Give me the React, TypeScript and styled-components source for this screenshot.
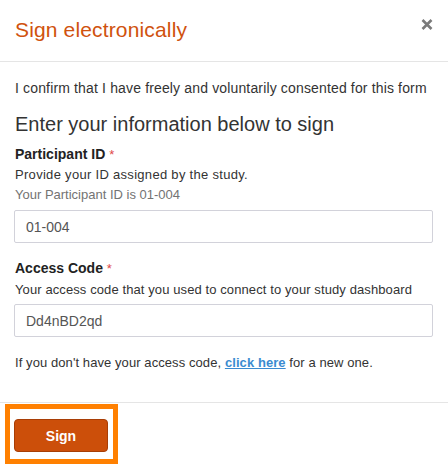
import React from "react";
import styled, { createGlobalStyle } from "styled-components";

const Global = createGlobalStyle`
  html, body { margin: 0; padding: 0; background: #fff; }
  body { font-family: "Liberation Sans", Arial, sans-serif; color: #333; }
  * { box-sizing: border-box; }
`;

const Modal = styled.div`
  width: 448px;
  height: 467px;
  background: #fff;
  display: flex;
  flex-direction: column;
`;

const Header = styled.div`
  height: 62px;
  padding: 15px 15px 0 15px;
  border-bottom: 1px solid #e5e5e5;
  display: flex;
  align-items: flex-start;
  justify-content: space-between;
`;

const Title = styled.h4`
  margin: 0;
  font-size: 21px;
  font-weight: normal;
  line-height: 30px;
  letter-spacing: 0.15px;
  color: #d0520e;
`;

const Close = styled.button`
  border: 0;
  background: none;
  padding: 0;
  margin: 4px 0 0 0;
  width: 12px;
  height: 12px;
  cursor: pointer;
  display: flex;
`;

const Body = styled.div`
  padding: 16px 15px 0 14px;
  display: flex;
  flex-direction: column;
`;

const Para = styled.p<{ $mt?: number; $size?: number; $ls?: number }>`
  margin: ${(p) => p.$mt ?? 0}px 0 0 0;
  font-size: ${(p) => p.$size ?? 13}px;
  letter-spacing: ${(p) => p.$ls ?? 0}px;
  line-height: 20px;
  padding-left: 1px;
`;

const Heading = styled.h3`
  margin: 12px 0 0 0;
  font-size: 20px;
  line-height: 28px;
  font-weight: normal;
  color: #333;
  padding-left: 1px;
`;

const Label = styled.label<{ $mt: number }>`
  margin-top: ${(p) => p.$mt}px;
  font-size: 14px;
  line-height: 20px;
  font-weight: bold;
  color: #222;
  padding-left: 1px;
`;

const Req = styled.span`
  color: #e04848;
  font-weight: normal;
  font-size: 13px;
`;

const Help = styled.div<{ $muted?: boolean; $ls?: number; $mt?: number }>`
  margin-top: ${(p) => p.$mt ?? 0}px;
  font-size: 13px;
  line-height: 20px;
  letter-spacing: ${(p) => p.$ls ?? 0}px;
  color: ${(p) => (p.$muted ? "#737373" : "#333")};
  padding-left: 1px;
`;

const Input = styled.input<{ $mt: number }>`
  margin-top: ${(p) => p.$mt}px;
  width: 419px;
  height: 33px;
  border: 1px solid #d2d2da;
  border-radius: 2px;
  padding: 0 11px;
  font-family: "Liberation Sans", Arial, sans-serif;
  font-size: 14px;
  color: #555;
  outline: none;
`;

const Link = styled.a`
  color: #3a8bd0;
  font-weight: bold;
  text-decoration: underline;
`;

const Spacer = styled.div`
  flex: 1;
`;

const Footer = styled.div`
  border-top: 1px solid #e5e5e5;
  padding: 1px 0 3px 5px;
  display: flex;
`;

const Focus = styled.div`
  border: 5px solid #ff8000;
  padding: 10px 5px 7px 4px;
  display: flex;
`;

const SignButton = styled.button`
  width: 94px;
  height: 33px;
  background: #cc4f0a;
  border: 1px solid #a83e06;
  border-radius: 4px;
  color: #fff;
  font-family: "Liberation Sans", Arial, sans-serif;
  font-size: 14px;
  font-weight: bold;
  cursor: pointer;
`;

export default function App() {
  return (
    <>
      <Global />
      <Modal>
        <Header>
          <Title>Sign electronically</Title>
          <Close aria-label="Close">
            <svg width="12" height="11" viewBox="0 0 12 11">
              <path d="M1.5 1 L10.5 10 M10.5 1 L1.5 10" stroke="#7a7a7a" strokeWidth="2.6" strokeLinecap="butt" />
            </svg>
          </Close>
        </Header>
        <Body>
          <Para $size={14} $ls={0.15}>
            I confirm that I have freely and voluntarily consented for this form
          </Para>
          <Heading>Enter your information below to sign</Heading>
          <Label $mt={6}>
            Participant ID <Req>*</Req>
          </Label>
          <Help $ls={0.3}>Provide your ID assigned by the study.</Help>
          <Help $muted>Your Participant ID is 01-004</Help>
          <Input $mt={5} defaultValue="01-004" />
          <Label $mt={15}>
            Access Code <Req>*</Req>
          </Label>
          <Help $ls={0.1} $mt={1}>
            Your access code that you used to connect to your study dashboard
          </Help>
          <Input $mt={4} defaultValue="Dd4nBD2qd" />
          <Para $mt={16} $ls={0.08}>
            If you don't have your access code, <Link href="#">click here</Link> for a new one.
          </Para>
        </Body>
        <Spacer />
        <Footer>
          <Focus>
            <SignButton>Sign</SignButton>
          </Focus>
        </Footer>
      </Modal>
    </>
  );
}
